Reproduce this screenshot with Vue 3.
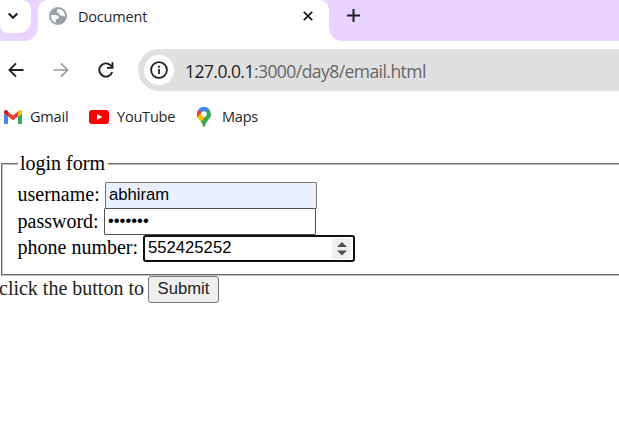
<script setup>
import { ref } from 'vue'

const username = ref('abhiram')
const password = ref('abhiram')
const phone = ref('552425252')
</script>

<template>
  <div class="window">
    <header class="tabstrip">
      <div class="search-tabs">
        <svg width="12" height="8" viewBox="0 0 12 8"><path d="M1.7 1.5 6 5.8l4.3-4.3" fill="none" stroke="#1f1f1f" stroke-width="2.1" /></svg>
      </div>
      <div class="tab">
        <svg class="globe" width="18" height="18" viewBox="0 0 18 18">
          <circle cx="9" cy="9" r="9" fill="#9aa0a6" />
          <path d="M9.3 2.1C8.1 2.7 7.8 3.6 7.9 4.6c.1 1 .7 1.2 1.5 1.3 1 .1 1 .7 1.2 1.5.3 1 1 1.2 2 1.2 1.100 0 1.400.7 2.500.8h1.100C16.100 5.500 13.100 2.200 9.300 2.100ZM2 8.100h4.100c1.900 0 3.600.7 3.600 2.500 0 1.200-.8 1.500-1.900 1.500-.9 0-1.100.7-1.100 1.500v2.200C3.900 14.900 1.800 12 2 8.100Z" fill="#fff" />
        </svg>
        <span class="tab-title">Document</span>
        <svg class="close" width="10" height="10" viewBox="0 0 10 10"><path d="m.8.8 8.400 8.400M9.200.8.8 9.200" stroke="#1f1f1f" stroke-width="1.800" /></svg>
      </div>
      <svg class="plus" width="13" height="13" viewBox="0 0 13 13"><path d="M6.500 0v13M0 6.500h13" stroke="#1f1f1f" stroke-width="2" /></svg>
    </header>

    <nav class="toolbar">
      <svg width="16" height="16" viewBox="0 0 16 16"><path d="M15.500 8H1.700M8 1.300 1.400 8 8 14.700" fill="none" stroke="#1f1f1f" stroke-width="1.800" /></svg>
      <svg width="16" height="16" viewBox="0 0 16 16"><path d="M.5 8h13.800M8 1.300 14.600 8 8 14.700" fill="none" stroke="#9b9b9b" stroke-width="1.700" /></svg>
      <svg class="reload" width="16" height="16" viewBox="0 0 16 16"><path d="M14.200 10A6.600 6.600 0 1 1 12.600 3.300L14.200 5M14.500.3v5.600H9" fill="none" stroke="#1f1f1f" stroke-width="1.900" /></svg>
      <div class="omnibox">
        <span class="info">
          <svg width="18" height="18" viewBox="0 0 18 18"><circle cx="9" cy="9" r="7.900" fill="none" stroke="#1f1f1f" stroke-width="1.800" /><path d="M9 8v5M9 4.800v1.900" stroke="#1f1f1f" stroke-width="1.800" /></svg>
        </span>
        <span class="url"><b>127.0.0.1</b>:3000/day8/email.html</span>
      </div>
    </nav>

    <nav class="bookmarks">
      <svg class="gmail" width="18" height="14" viewBox="0 0 18 14">
        <path d="M0 3.500 4 6.400V14H1.200A1.200 1.200 0 0 1 0 12.800Z" fill="#4285f4" />
        <path d="m14 6.400 4-2.900v9.300a1.200 1.200 0 0 1-1.200 1.200H14Z" fill="#34a853" />
        <path d="M4 1.600 9 5.400l5-3.800v4.900L9 10.300 4 6.500Z" fill="#ea4335" />
        <path d="M0 3.600V2C0 .2 1.900-.6 3.300.5L4 1v5.500Z" fill="#c5221f" />
        <path d="M18 3.600V2c0-1.800-1.900-2.600-3.300-1.500L14 1v5.500Z" fill="#fbbc04" />
      </svg>
      <span class="label gmail-label">Gmail</span>
      <svg class="youtube" width="20" height="14" viewBox="0 0 20 14"><rect width="20" height="14" rx="3" fill="#f00" /><path d="m8 4 5.300 3L8 10Z" fill="#fff" /></svg>
      <span class="label youtube-label">YouTube</span>
      <svg class="maps" width="14" height="20" viewBox="0 0 14 20">
        <defs><clipPath id="pin"><path d="M7 0a7 7 0 0 1 7 7c0 5-5 6.500-6 12.200-.2 1-1.800 1-2 0C5 13.500 0 12 0 7a7 7 0 0 1 7-7Z" /></clipPath></defs>
        <g clip-path="url(#pin)">
          <path d="M0 0h14v20H0Z" fill="#34a853" />
          <path d="M0 3 7 7l5.500-6V0H0Z" fill="#4285f4" />
          <path d="M0 1.500 5.500 6 1.500 11H0Z" fill="#ea4335" />
          <path d="M0 10.500 5 5l3.800 4.500L3 16Z" fill="#fbbc04" />
        </g>
        <circle cx="7" cy="7" r="2.800" fill="#fff" />
      </svg>
      <span class="label maps-label">Maps</span>
    </nav>

    <main class="page">
      <fieldset>
        <legend>login form</legend>
        <label class="row">username:<input v-model="username" class="field user" type="text" /></label>
        <label class="row">password:<input v-model="password" class="field pass" type="password" /></label>
        <label class="row">phone number:
          <span class="phone">
            <input v-model="phone" type="text" />
            <span class="spinner"><svg width="10" height="14" viewBox="0 0 10 14"><path d="M0 5 5 0l5 5ZM0 8.500h10l-5 5Z" fill="#505050" /></svg></span>
          </span>
        </label>
      </fieldset>
      <div class="submit-row">click the button to<button type="button">Submit</button></div>
    </main>
  </div>
</template>

<style>
body { background: #fff; overflow: hidden; }
</style>

<style scoped>
.window { width: 619px; height: 439px; overflow: hidden; background: #fff; font-family: "Open Sans", "Noto Sans", sans-serif; color: #1f1f1f; }
.window * { box-sizing: border-box; }
svg { display: block; flex: none; }
.tabstrip { display: flex; height: 41px; background: #e8d4ff; }
.search-tabs { width: 31px; height: 33px; padding: 12px 0 0 7px; background: #fff; border-radius: 0 9px 12px 8px; flex: none; }
.tab { position: relative; display: flex; width: 291px; height: 41px; margin-left: 7px; padding-left: 11px; background: #fff; border-radius: 10px 10px 0 0; flex: none; }
.tab::before, .tab::after { content: ""; position: absolute; bottom: 0; width: 13px; height: 13px; }
.tab::before { right: 100%; background: radial-gradient(circle at 0 0, transparent 12.5px, #fff 13px); }
.tab::after { left: 100%; background: radial-gradient(circle at 100% 0, transparent 12.5px, #fff 13px); }
.globe { margin-top: 7px; }
.tab-title { width: 225px; margin: 6px 0 0 11px; font-size: 14.5px; line-height: 21px; letter-spacing: -0.2px; }
.close { margin-top: 11px; }
.plus { margin: 9px 0 0 18px; }
.toolbar { display: flex; align-items: center; height: 50px; padding: 8px 0 0 8px; }
.toolbar > svg + svg { margin-left: 29px; }
.omnibox { display: flex; align-items: center; flex: 1; height: 42px; margin-left: 24px; padding-left: 6px; background: #e0e0e0; border-radius: 21px 0 0 21px; }
.info { display: flex; align-items: center; justify-content: center; width: 30px; height: 30px; border-radius: 50%; background: #fff; flex: none; }
.url { margin: 1px 0 0 11px; font-size: 17.5px; line-height: 24px; letter-spacing: -0.55px; color: #666; white-space: nowrap; }
.url b { font-weight: 400; color: #1f1f1f; }
.bookmarks { display: flex; align-items: center; height: 52px; padding-left: 4px; }
.label { font-size: 14.5px; line-height: 20px; letter-spacing: -0.2px; white-space: nowrap; flex: none; }
.gmail-label { width: 50px; margin-left: 8px; }
.youtube { margin-left: 9px; }
.youtube-label { width: 71px; margin-left: 8px; }
.maps { margin-left: 9px; }
.maps-label { margin-left: 11px; }
.page { padding: 9px 0 0 1px; font-family: "Liberation Serif", serif; font-size: 20px; line-height: 23px; color: #000; }
fieldset { width: 640px; height: 124px; margin: 0; padding: 7px 0 0 14.5px; border: 2px groove #c0c0c0; }
legend { height: 23px; padding: 0 3px 0 2px; margin-left: 0.5px; }
.row { display: flex; height: 27px; line-height: 25px; white-space: pre; }
.row:nth-of-type(n+2) { height: 26px; }
input { font-family: "Liberation Sans", sans-serif; font-size: 16.67px; color: #000; outline: 0; }
.field { width: 212px; height: 27px; padding: 0 3px 2px; border: 1px solid #767676; border-radius: 1px; }
.user { margin: 0 0 0 5.3px; background: #e8f0fe; }
.pass { margin: -1px 0 0 5.3px; background: #fff; border-color: #505050; }
.phone { display: flex; position: relative; width: 212px; height: 27px; padding: 1px 2px 1px 3px; border: 2px solid #101010; border-radius: 3px; background: #fff; }
.phone input { width: 184px; height: 20px; border: 0; padding: 0; background: transparent; }
.spinner { display: flex; align-items: center; justify-content: center; width: 19px; height: 21px; background: #efefef; flex: none; }
.submit-row { display: flex; margin-left: -2px; line-height: 24px; color: #222; }
button { width: 71px; height: 27px; margin-left: 4px; padding: 0 0 2px; border: 1px solid #767676; border-radius: 3px; background: #efefef; font-family: "Liberation Sans", sans-serif; font-size: 16.67px; line-height: 20px; color: #222; }
</style>
